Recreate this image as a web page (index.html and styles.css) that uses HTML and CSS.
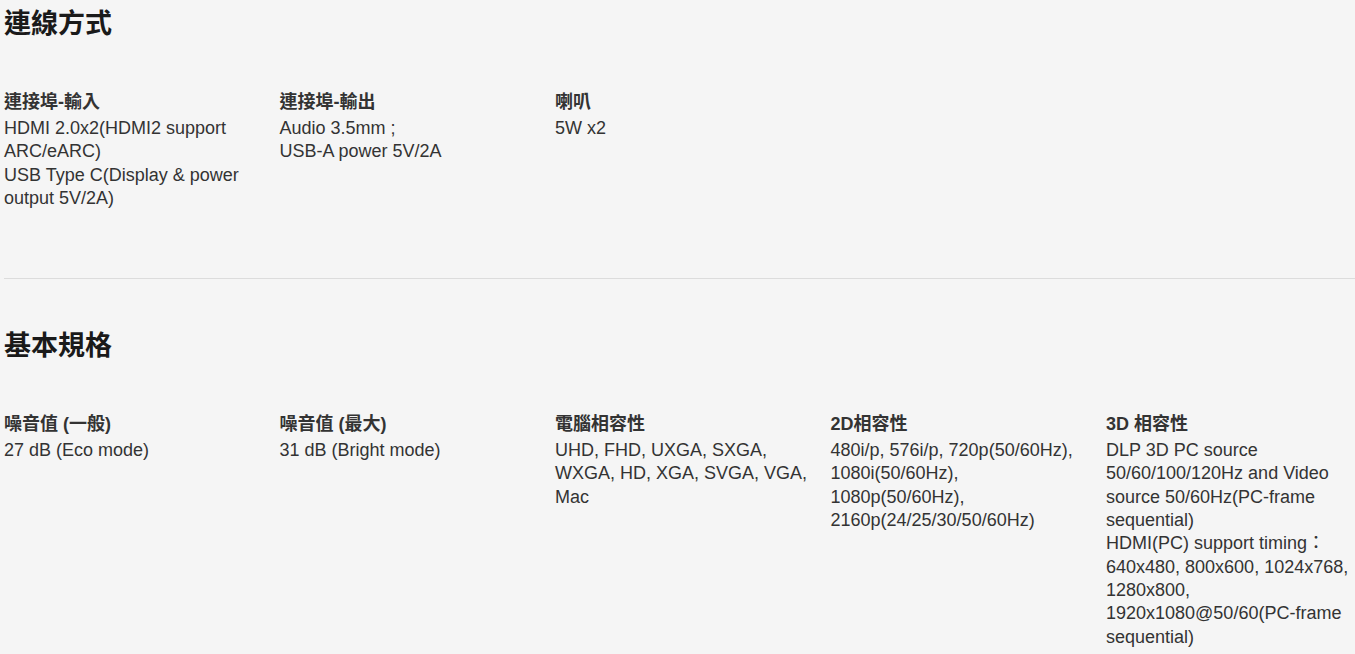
FILE: index.html
```html
<!DOCTYPE html>
<html lang="zh-Hant">
<head>
<meta charset="utf-8">
<title>規格</title>
<link rel="stylesheet" href="styles.css">
</head>
<body>
<main class="specs">
  <section class="spec-section">
    <h2 class="spec-title">連線方式</h2>
    <div class="spec-grid">
      <div class="spec-item">
        <div class="spec-label">連接埠-輸入</div>
        <div class="spec-value">HDMI 2.0x2(HDMI2 support ARC/eARC)<br>USB Type C(Display &amp; power output 5V/2A)</div>
      </div>
      <div class="spec-item">
        <div class="spec-label">連接埠-輸出</div>
        <div class="spec-value">Audio 3.5mm ;<br>USB-A power 5V/2A</div>
      </div>
      <div class="spec-item">
        <div class="spec-label">喇叭</div>
        <div class="spec-value">5W x2</div>
      </div>
    </div>
  </section>
  <hr class="divider">
  <section class="spec-section">
    <h2 class="spec-title">基本規格</h2>
    <div class="spec-grid">
      <div class="spec-item">
        <div class="spec-label">噪音值 (一般)</div>
        <div class="spec-value">27 dB (Eco mode)</div>
      </div>
      <div class="spec-item">
        <div class="spec-label">噪音值 (最大)</div>
        <div class="spec-value">31 dB (Bright mode)</div>
      </div>
      <div class="spec-item">
        <div class="spec-label">電腦相容性</div>
        <div class="spec-value">UHD, FHD, UXGA, SXGA, WXGA, HD, XGA, SVGA, VGA, Mac</div>
      </div>
      <div class="spec-item">
        <div class="spec-label">2D相容性</div>
        <div class="spec-value">480i/p, 576i/p, 720p(50/60Hz), 1080i(50/60Hz), 1080p(50/60Hz), 2160p(24/25/30/50/60Hz)</div>
      </div>
      <div class="spec-item">
        <div class="spec-label">3D 相容性</div>
        <div class="spec-value">DLP 3D PC source 50/60/100/120Hz and Video source 50/60Hz(PC-frame sequential)<br>HDMI(PC) support timing：640x480, 800x600, 1024x768, 1280x800, 1920x1080@50/60(PC-frame sequential)</div>
      </div>
    </div>
  </section>
</main>
</body>
</html>
```

FILE: styles.css
```css
html, body {
  margin: 0;
  padding: 0;
  background: #f5f5f5;
  overflow: hidden;
}

body {
  font-family: "Liberation Sans", Arial, "Noto Sans CJK TC", sans-serif;
  color: #333;
}

.specs {
  padding: 8px 0 0 4px;
}

.spec-title {
  margin: 0;
  font-family: "Liberation Sans", Arial, "Noto Sans CJK TC", sans-serif;
  font-size: 27px;
  line-height: 32px;
  font-weight: bold;
  color: #1a1a1a;
}

.spec-grid {
  margin-top: 51px;
  display: grid;
  grid-template-columns: repeat(5, 255.5px);
  column-gap: 20px;
}

.spec-label {
  font-size: 18px;
  line-height: 23px;
  font-weight: bold;
  color: #333;
  margin-bottom: 3px;
}

.spec-value {
  font-size: 18px;
  line-height: 23.3px;
  color: #333;
}

.divider {
  margin: 68px 0 51px 0;
  border: 0;
  border-top: 1px solid #dcdcdc;
  height: 0;
}
```
